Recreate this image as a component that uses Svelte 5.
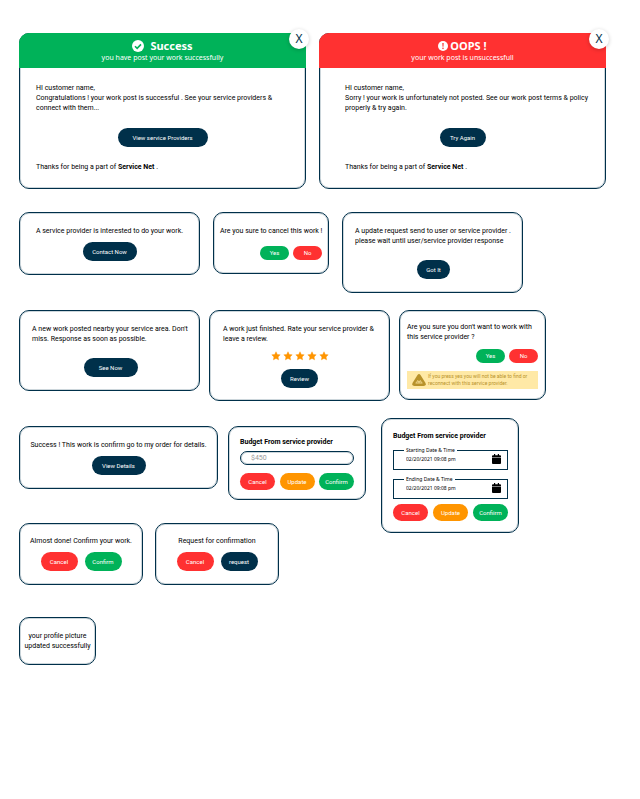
<script>
  let budget = $state('');
  let starting = $state('02/20/2021 09:08 pm');
  let ending = $state('02/20/2021 09:08 pm');
  const stars = [1, 2, 3, 4, 5];
</script>

{#snippet star()}
  <svg viewBox="0 0 24 24" width="10" height="10" aria-hidden="true">
    <path fill="#ff9500" stroke="#ff9500" stroke-width="1" stroke-linejoin="round" d="M12 1.800l3.100 6.500 7 .9-5.100 4.900 1.300 7.100L12 17.800l-6.300 3.400L7 14.100 1.900 9.200l7-.9z" />
  </svg>
{/snippet}

{#snippet calendar()}
  <svg class="calendar" viewBox="0 0 18 20" width="9" height="10" aria-hidden="true">
    <path d="M4 0h2.400v2.500h5.200V0H14v2.500h2.200A1.800 1.800 0 0 1 18 4.300V6H0V4.300A1.800 1.800 0 0 1 1.800 2.500H4zM0 7.200h18v11A1.800 1.800 0 0 1 16.200 20H1.800A1.800 1.800 0 0 1 0 18.200z" />
  </svg>
{/snippet}

{#snippet dateField(id, label, value)}
  <fieldset>
    <legend><label for={id}>{label}</label></legend>
    <div class="date">
      <input {id} type="text" {value} />
      {@render calendar()}
    </div>
  </fieldset>
{/snippet}

<main>
  <div class="row banners">
    <section class="card banner">
      <header class="ok">
        <h2>
          <svg viewBox="0 0 24 24" width="12" height="12" aria-hidden="true">
            <circle cx="12" cy="12" r="12" fill="#fff" />
            <path d="M6 12.500l4.300 4.200L18 8.700" fill="none" stroke="#00b259" stroke-width="3.200" />
          </svg>
          Success
        </h2>
        <p>you have post your work successfully</p>
      </header>
      <button class="close" aria-label="Close">X</button>
      <div class="message">
        <p>HI customer name,<br />Congratulations ! your work post is successful . See your service providers &amp; connect with them...</p>
        <button class="pill navy wide">View service Providers</button>
        <p>Thanks for being a part of <b>Service Net</b> .</p>
      </div>
    </section>

    <section class="card banner">
      <header class="fail">
        <h2 class="tight">
          <svg viewBox="0 0 24 24" width="10" height="10" aria-hidden="true">
            <circle cx="12" cy="12" r="12" fill="#fff" />
            <path d="M10.300 4.500h3.400l-.6 9.500h-2.200z" fill="#ff3131" />
            <circle cx="12" cy="17.600" r="1.900" fill="#ff3131" />
          </svg>
          OOPS !
        </h2>
        <p>your work post is unsuccessfull</p>
      </header>
      <button class="close" aria-label="Close">X</button>
      <div class="message inset">
        <p>HI customer name,<br />Sorry ! your work is unfortunately not posted. See our work post terms &amp; policy properly &amp; try again.</p>
        <button class="pill navy mid">Try Again</button>
        <p>Thanks for being a part of <b>Service Net</b> .</p>
      </div>
    </section>
  </div>

  <div class="row second">
    <section class="card notice">
      <p class="center">A service provider is interested to do your work.</p>
      <button class="pill navy">Contact Now</button>
    </section>
    <section class="card ask short">
      <p>Are you sure to cancel this work !</p>
      <div class="choices">
        <button class="small green">Yes</button>
        <button class="small red">No</button>
      </div>
    </section>
    <section class="card notice roomy">
      <p>A update request send to user or service provider . please wait until user/service provider response</p>
      <button class="pill navy fit">Got It</button>
    </section>
  </div>

  <div class="row third">
    <section class="card notice roomy">
      <p>A new work posted nearby your service area. Don't miss. Response as soon as possible.</p>
      <button class="pill navy">See Now</button>
    </section>
    <section class="card notice rate">
      <p>A work just finished. Rate your service provider &amp; leave a review.</p>
      <div class="stars">
        {#each stars as n}
          <button aria-label={`Rate ${n} of 5`}>{@render star()}</button>
        {/each}
      </div>
      <button class="pill navy fit">Review</button>
    </section>
    <section class="card ask long">
      <p>Are you sure you don't want to work with this service provider ?</p>
      <div class="choices">
        <button class="small green">Yes</button>
        <button class="small red">No</button>
      </div>
      <div class="warning">
        <svg viewBox="0 0 28 24" width="14" height="12" aria-hidden="true">
          <path fill="#b8922a" d="M11 2.200Q14-1.800 17 2.200L27 18Q29 24 23 24H5Q-1 24 1 18z" />
          <path fill="none" stroke="#ffe9a6" stroke-width="1.600" d="M7 18h14M9 17l2.500-4 2.500 4 2.500-4 2.500 4" />
        </svg>
        <p>If you press yes you will not be able to find or reconnect with this service provider.</p>
      </div>
    </section>
  </div>

  <div class="row fourth">
    <div class="stack">
      <div class="row">
        <section class="card notice done">
          <p class="center">Success ! This work is confirm go to my order for details.</p>
          <button class="pill navy">View Details</button>
        </section>
        <section class="card budget">
          <h3><label for="budget">Budget From service provider</label></h3>
          <input id="budget" class="amount" type="text" placeholder="$450" bind:value={budget} />
          <div class="actions">
            <button class="action red">Cancel</button>
            <button class="action orange">Update</button>
            <button class="action green">Confiirm</button>
          </div>
        </section>
      </div>
      <div class="row pairs">
        <section class="card notice pair">
          <p class="center">Almost done! Confirm your work.</p>
          <div class="two">
            <button class="pill red">Cancel</button>
            <button class="pill green">Confirm</button>
          </div>
        </section>
        <section class="card notice pair">
          <p class="center">Request for confirmation</p>
          <div class="two">
            <button class="pill red">Cancel</button>
            <button class="pill navy">request</button>
          </div>
        </section>
      </div>
    </div>
    <section class="card budget dates">
      <h3>Budget From service provider</h3>
      {@render dateField('starting', 'Starting Date & Time', starting)}
      {@render dateField('ending', 'Ending Date & Time', ending)}
      <div class="actions">
        <button class="action red">Cancel</button>
        <button class="action orange">Update</button>
        <button class="action green">Confiirm</button>
      </div>
    </section>
  </div>

  <div class="row last">
    <section class="card profile">
      <p class="center">your profile picture updated successfully</p>
    </section>
  </div>
</main>

<style>
  :global(body) {
    background: #fff;
  }
  main {
    padding: 33px 34px 33px 19px;
    font-family: Roboto, sans-serif;
    font-size: 7px;
    line-height: 10px;
    color: #000;
  }
  main :global(*) {
    box-sizing: border-box;
  }
  p, h2, h3 {
    margin: 0;
    font-size: inherit;
  }
  button, input {
    margin: 0;
    padding: 0;
    border: 0;
    background: none;
    font: inherit;
    color: inherit;
  }
  button {
    cursor: pointer;
    white-space: nowrap;
  }
  svg {
    display: block;
    flex: none;
  }
  .row {
    display: flex;
    align-items: flex-start;
  }
  .card {
    position: relative;
    border: 1px solid #00304a;
    border-radius: 10px;
    box-shadow: inset 0 0 0 1px rgba(0, 48, 74, 0.2);
  }
  .center {
    text-align: center;
  }

  .navy { background: #00304a; }
  .green { background: #00b259; }
  .red { background: #ff3131; }
  .orange { background: #ff9500; }

  .pill, .small, .action {
    font-size: 6px;
    color: #fff;
  }
  .pill {
    height: 19px;
    width: 54px;
    border-radius: 10px;
  }
  .pill.fit {
    width: auto;
    padding: 0 9px;
  }
  .pill.mid { width: 46px; }
  .pill.wide { width: 90px; }

  /* banners */
  .banners {
    gap: 13px;
  }
  .banner {
    flex: 1;
  }
  header {
    margin: -1px -1px 0;
    padding: 6px 0 5px;
    border-radius: 10px 10px 0 0;
    font-family: "Noto Sans", sans-serif;
    text-align: center;
    color: #fff;
  }
  .ok { background: #00b259; }
  .fail { background: #ff3131; }
  h2 {
    display: flex;
    justify-content: center;
    align-items: center;
    gap: 6px;
    font-size: 11px;
    line-height: 14px;
    font-weight: 700;
  }
  .tight {
    gap: 2px;
  }
  .close {
    position: absolute;
    top: -5px;
    right: -4px;
    width: 20px;
    height: 20px;
    border-radius: 50%;
    background: #fff;
    box-shadow: 0 1px 4px rgba(0, 0, 0, 0.2);
    font-family: "Noto Sans", sans-serif;
    font-size: 12px;
    color: #00304a;
  }
  .message {
    display: flex;
    flex-direction: column;
    gap: 15px;
    padding: 15px 16px 16px;
  }
  .inset {
    padding-left: 25px;
    padding-right: 12px;
  }
  .message .pill {
    align-self: center;
  }
  .inset .pill {
    margin-right: 13px;
  }

  /* notices */
  .notice {
    display: flex;
    flex-direction: column;
    align-items: center;
    gap: 6px;
    width: 181px;
    padding: 13px 9px;
  }
  .roomy {
    gap: 14px;
    padding: 13px 10px 13px 12px;
  }
  .second {
    margin-top: 23px;
    gap: 13px;
  }
  .ask {
    padding: 13px 6px;
  }
  .choices {
    display: flex;
    justify-content: flex-end;
    gap: 4px;
  }
  .small {
    width: 29px;
    height: 14px;
    border-radius: 7px;
  }
  .short {
    width: 116px;
    white-space: nowrap;
  }
  .short .choices {
    margin-top: 10px;
  }

  .third {
    margin-top: 17px;
    gap: 9px;
  }
  .rate {
    gap: 7px;
    padding: 13px 13px 12px;
  }
  .stars {
    display: flex;
    gap: 2px;
    margin-bottom: 1px;
  }
  .stars button {
    display: block;
  }
  .long {
    width: 147px;
    padding: 11px 7px 10px;
  }
  .long .choices {
    margin-top: 7px;
  }
  .warning {
    display: flex;
    align-items: center;
    gap: 2px;
    margin-top: 8px;
    padding: 2px 0 2px 5px;
    background: #ffe9a6;
    color: #b8922a;
    font-size: 5px;
    line-height: 7px;
  }

  .fourth {
    margin-top: 17px;
    gap: 15px;
  }
  .stack {
    padding-top: 8px;
  }
  .stack .row {
    gap: 10px;
  }
  .done {
    width: 199px;
  }
  .budget {
    width: 138px;
    padding: 10px 11px 9px;
  }
  h3 {
    font-weight: 700;
  }
  .amount {
    display: block;
    width: 100%;
    height: 14px;
    margin: 4px 0 8px;
    padding: 0 10px;
    border: 1px solid #00304a;
    border-radius: 7px;
    box-shadow: inset 0 0 0 1px rgba(0, 48, 74, 0.2);
  }
  .amount::placeholder {
    color: #999;
    opacity: 1;
  }
  .actions {
    display: flex;
    justify-content: space-between;
  }
  .action {
    width: 35px;
    height: 17px;
    border-radius: 9px;
  }
  .stack .pairs {
    margin-top: 23px;
    gap: 12px;
  }
  .pair {
    width: 124px;
    padding-top: 12px;
  }
  .two {
    display: flex;
    gap: 7px;
  }
  .two .pill {
    width: 37px;
  }

  .dates {
    padding: 12px 10px 11px 11px;
  }
  fieldset {
    min-width: 0;
    margin: 5px 0;
    padding: 0 6px 5px 10px;
    border: 1px solid #00304a;
    font-family: "Noto Sans", sans-serif;
    font-size: 5px;
  }
  legend {
    padding: 0 2px;
    line-height: 8px;
  }
  .date {
    display: flex;
    align-items: center;
    justify-content: space-between;
    padding-left: 2px;
  }
  .date input {
    flex: 1;
    min-width: 0;
    height: 10px;
  }

  .last {
    margin-top: 32px;
  }
  .profile {
    width: 77px;
    padding: 13px 2px;
  }
</style>
